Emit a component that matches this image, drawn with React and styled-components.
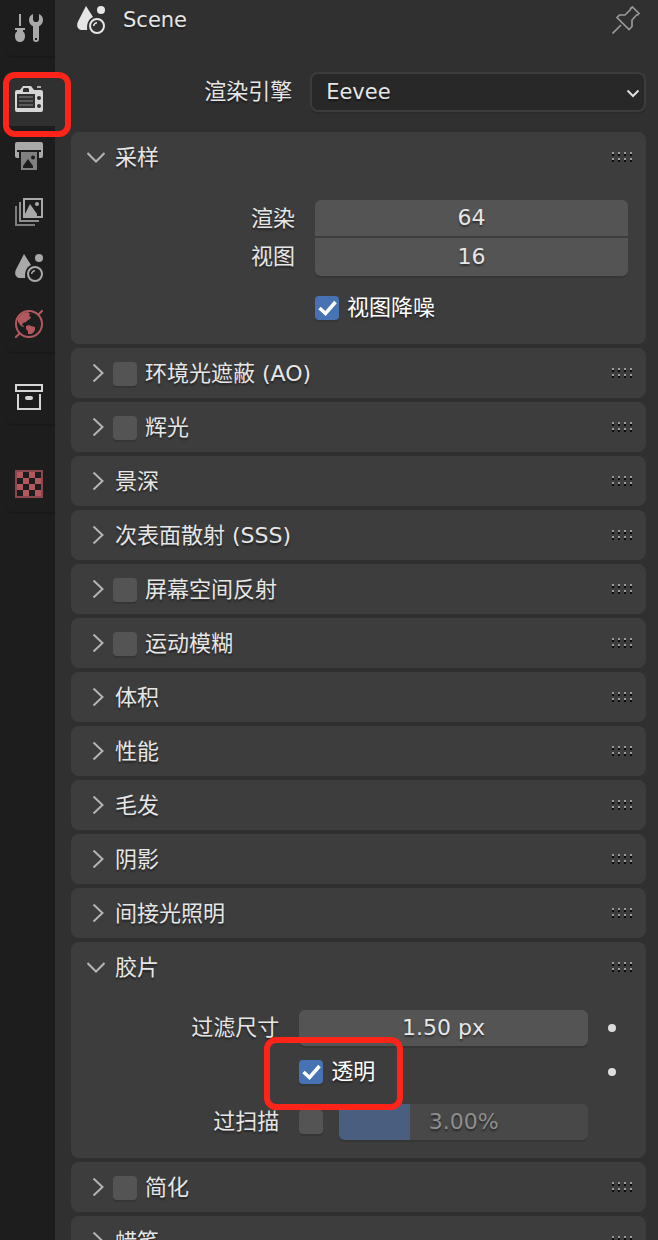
import React, { useState } from "react";
import styled, { createGlobalStyle, css } from "styled-components";

const Global = createGlobalStyle`
  *, *::before, *::after { box-sizing: border-box; }
  html, body { margin: 0; background: #303030; }
  body {
    color: #e6e6e6;
    font: 22px/36px "DejaVu Sans", "Noto Sans CJK SC", sans-serif;
    text-shadow: 0 2px 2px rgba(0, 0, 0, 0.45);
  }
  button, input, select { font: inherit; color: inherit; text-shadow: inherit; margin: 0; }
`;

const Editor = styled.div`
  display: flex;
  height: 100vh;
  overflow: hidden;
`;

/* ---------- tab rail ---------- */

const Rail = styled.nav`
  flex: 0 0 55px;
  background: #1d1d1d;
  padding-left: 4px;
`;

const TabGroup = styled.div`
  margin-top: ${(p) => p.$gap || 0}px;
  border-bottom: 2px solid #191919;
  border-bottom-left-radius: 10px;
`;

const Tab = styled.button`
  position: relative;
  display: flex;
  align-items: flex-start;
  width: 100%;
  height: 54px;
  margin-bottom: 2px;
  padding: 14px 0 0 11px;
  border: 0;
  border-radius: 8px 0 0 8px;
  background: ${(p) => (p.$active ? "#303030" : "transparent")};
`;

const Highlight = styled.span`
  position: absolute;
  inset: ${(p) => p.$inset};
  border: 6px solid #ff2419;
  border-radius: 12px;
  pointer-events: none;
  z-index: 2;
`;

/* ---------- header ---------- */

const Main = styled.main`
  flex: 1;
  min-width: 0;
  padding: 0 12px 0 16px;
`;

const TopBar = styled.header`
  display: flex;
  align-items: center;
  height: 40px;
  padding: 0 6px;
  gap: 18px;
`;

const SceneName = styled.span`
  flex: 1;
  font-size: 21px;
`;

const IconButton = styled.button`
  padding: 0;
  border: 0;
  background: none;
  svg { display: block; }
`;

/* ---------- fields ---------- */

const FieldRow = styled.div`
  display: grid;
  grid-template-columns: 27fr 41fr ${(p) => (p.$dotted ? "20px" : "")};
  column-gap: 20px;
  align-items: center;
  margin-top: ${(p) => p.$gap || 0}px;
`;

const EngineRow = styled(FieldRow)`
  column-gap: 18px;
  margin: 32px 0 20px;
`;

const FieldLabel = styled.label`
  text-align: right;
  white-space: nowrap;
`;

const SelectBox = styled.div`
  position: relative;
  svg {
    position: absolute;
    right: 6px;
    top: 17px;
    pointer-events: none;
  }
`;

const Select = styled.select`
  display: block;
  appearance: none;
  width: 100%;
  height: 40px;
  padding: 0 32px 2px 14px;
  border: 2px solid #3c3c3c;
  border-radius: 8px;
  background: #282828;
  box-shadow: 0 2px 0 #2b2b2b;
  font-size: 21px;
`;

const fieldShape = {
  single: "6px",
  top: "6px 6px 0 0",
  bottom: "0 0 6px 6px",
};

const NumberInput = styled.input`
  display: block;
  width: 100%;
  height: ${(p) => (p.$shape ? 38 : 36)}px;
  padding: 0 0 ${(p) => (p.$shape ? 2 : 0)}px;
  border: 0;
  border-radius: ${(p) => fieldShape[p.$shape || "single"]};
  background: #545454;
  text-align: center;
  ${(p) =>
    p.$shape === "top"
      ? css`border-bottom: 2px solid #3d3d3d;`
      : css`box-shadow: 0 2px 0 #353535;`}
`;

const CheckLabel = styled.label`
  display: flex;
  align-items: center;
  gap: 8px;
  position: relative;
  height: 36px;
  white-space: nowrap;
  color: ${(p) => (p.$bright ? "#ffffff" : "inherit")};
`;

const CheckBox = styled.span`
  position: relative;
  flex: 0 0 24px;
  height: 24px;
  input {
    appearance: none;
    display: block;
    width: 24px;
    height: 24px;
    border-radius: 4px;
    background: #545454;
    box-shadow: 0 2px 0 #353535;
  }
  input:checked { background: #4772b3; }
  svg { position: absolute; inset: 0; visibility: hidden; pointer-events: none; }
  input:checked + svg { visibility: visible; }
`;

const SliderGroup = styled.div`
  display: flex;
  align-items: center;
  gap: 16px;
`;

const SliderBox = styled.div`
  position: relative;
  flex: 1;
  height: 36px;
  output {
    position: absolute;
    inset: 0;
    text-align: center;
    color: #8e8e8e;
    pointer-events: none;
  }
`;

const Slider = styled.input`
  appearance: none;
  display: block;
  width: 100%;
  height: 36px;
  border-radius: 6px;
  background: linear-gradient(to right, #4a5e80 71px, #484848 71px);
  box-shadow: 0 2px 0 #363636;
  &::-webkit-slider-thumb { appearance: none; width: 1px; height: 36px; }
`;

const KeyDot = styled.button`
  width: 8px;
  height: 8px;
  padding: 0;
  border: 0;
  border-radius: 50%;
  background: #dcdcdc;
`;

/* ---------- panels ---------- */

const PanelBox = styled.section`
  margin-bottom: 4px;
  border-radius: 8px;
  background: #3d3d3d;
`;

const PanelHeader = styled.div`
  display: flex;
  align-items: center;
  height: 50px;
  padding: 0 14px 0 16px;
  ${CheckLabel} { margin-top: 2px; }
`;

const Toggle = styled.button`
  display: flex;
  align-items: center;
  gap: 10px;
  padding: 0;
  border: 0;
  background: none;
  white-space: nowrap;
  margin-right: ${(p) => (p.$compact ? 8 : 0)}px;
`;

const Title = styled.span`
  padding-top: 2px;
`;

const Grip = styled.svg`
  margin-left: auto;
`;

const PanelBody = styled.div`
  padding: 18px;
`;

/* ---------- drawings ---------- */

const Icon = ({ children }) => (
  <svg width="28" height="28" viewBox="0 0 28 28" fill="none" aria-hidden="true">
    {children}
  </svg>
);

const ToolIcon = () => (
  <Icon>
    <g fill="#a9a9a9">
      <path d="M4 0h2v12H4zM0 14h10v2H8v1.500c1.300.8 2 2.400 2 4.500 0 3.800-1.700 6-5 6s-5-2.200-5-6c0-2.100.7-3.700 2-4.500V16H0z" />
      <path
        fillRule="evenodd"
        d="M18 0C15.500 1 14 3.300 14 6c0 2.800 1.600 5 4 6.300V25a3 3 0 0 0 6 0V12.300C26.400 11 28 8.800 28 6c0-2.700-1.500-5-4-6v6l-1.500 2h-3L18 6zM20 24h2v2h-2z"
      />
    </g>
  </Icon>
);

const RenderIcon = () => (
  <Icon>
    <path
      fill="#d6d6d6"
      fillRule="evenodd"
      d="M8 0h8l3 4h7a2 2 0 0 1 2 2v18a2 2 0 0 1-2 2H2a2 2 0 0 1-2-2V6a2 2 0 0 1 2-2h3zM9 2L8 3v3h6V3l-1-1zM2 8v14h18V8z"
    />
    <path d="M22 1h4" stroke="#b0b0b0" strokeWidth="2" />
    <path d="M4 11h14M4 15h14M4 19h14" stroke="#6a6a6a" strokeWidth="1.500" />
    <circle cx="24" cy="12" r="2" fill="#303030" />
    <circle cx="24" cy="20" r="2" fill="#303030" />
  </Icon>
);

const OutputIcon = () => (
  <Icon>
    <path fill="#a9a9a9" d="M2 0h24a2 2 0 0 1 2 2v12a2 2 0 0 1-2 2h-2v-6h2V8H2v2h2v6H2a2 2 0 0 1-2-2V2a2 2 0 0 1 2-2z" />
    <path fill="#808080" d="M6 10h16v18H6z" />
    <path fill="#1d1d1d" d="M8 26v-2l5-7 5 7v2z" />
    <circle cx="18" cy="15.500" r="2" fill="#1d1d1d" />
  </Icon>
);

const ViewLayerIcon = () => (
  <Icon>
    <path d="M1 8v19h19" stroke="#7c7c7c" strokeWidth="2" />
    <path d="M5 4v19h19" stroke="#8e8e8e" strokeWidth="2" />
    <rect x="9" y="1" width="18" height="18" stroke="#a9a9a9" strokeWidth="2" />
    <path d="M10 18v-2l5-10 7 10v2z" fill="#a9a9a9" />
    <circle cx="22" cy="6" r="2" fill="#a9a9a9" />
  </Icon>
);

const SceneIcon = ({ color = "#a9a9a9" }) => (
  <Icon>
    <path fill={color} d="M9 0L1 15.500C-1 19.500.5 24 5.500 24h4.700C9.500 18 11.500 13 16 11z" />
    <circle cx="24" cy="4" r="4" fill={color} />
    <circle cx="20" cy="20" r="7" stroke={color} strokeWidth="2" />
    <path d="M16.700 20a3.300 3.300 0 0 1 3.300-3.300" stroke={color} strokeWidth="1.500" />
  </Icon>
);

const WorldIcon = () => (
  <Icon>
    <circle cx="14" cy="14" r="13" stroke="#b2595f" strokeWidth="2" />
    <path d="M0 28l5-5M23 5l5-5" stroke="#b2595f" strokeWidth="2" />
    <path
      fill="#b2595f"
      d="M3 8l5-5 5-1 2 2-1 2 2 1-1 2-2 1-2 2-3 1-1 2 2 1v1l-3-1-3-4zM11 16l3-1 2 1 4 1v3l-2 3-2 1h-3v-3l-2-2z"
    />
  </Icon>
);

const ObjectIcon = () => (
  <Icon>
    <path d="M1 3h26v6H1zM3 12v15h22V12" stroke="#d6d6d6" strokeWidth="2" />
    <rect x="10" y="14" width="8" height="4" rx="2" fill="#d6d6d6" />
  </Icon>
);

const TextureIcon = () => (
  <Icon>
    <rect x="1" y="1" width="26" height="26" stroke="#8b474d" strokeWidth="2" />
    <path
      fill="#b2595f"
      d="M2 2h6v6H2zM14 2h6v6h-6zM8 8h6v6H8zM20 8h6v6h-6zM2 14h6v6H2zM14 14h6v6h-6zM8 20h6v6H8zM20 20h6v6h-6z"
    />
  </Icon>
);

const PinIcon = () => (
  <Icon>
    <path
      d="M0.500 27.500L9 19M20.500 1l6.500 6.500-1.500 1.500h-1L20 14v6.500L17 23.500 5 11.500 7.500 9H13l5.500-5.500V2.500z"
      stroke="#999999"
      strokeWidth="1.700"
    />
  </Icon>
);

const Chevron = ({ open }) => (
  <svg width="18" height="18" viewBox="0 0 18 18" fill="none" aria-hidden="true">
    <path d={open ? "M0.500 5L9 13.500 17.500 5" : "M6.500 0.500L15.500 9 6.500 17.500"} stroke="#b4b4b4" strokeWidth="2" />
  </svg>
);

const DragGrip = () => (
  <Grip width="20" height="10" viewBox="0 0 20 10" aria-hidden="true">
    <path fill="#9a9a9a" d="M0 0h2v2H0zM6 0h2v2H6zM12 0h2v2h-2zM18 0h2v2h-2zM0 6h2v2H0zM6 6h2v2H6zM12 6h2v2h-2zM18 6h2v2h-2z" />
    <path fill="#0c0c0c" d="M0 2h2v2H0zM6 2h2v2H6zM12 2h2v2h-2zM18 2h2v2h-2zM0 8h2v2H0zM6 8h2v2H6zM12 8h2v2h-2zM18 8h2v2h-2z" />
  </Grip>
);

/* ---------- composed parts ---------- */

const Check = (props) => (
  <CheckBox>
    <input type="checkbox" {...props} />
    <svg width="24" height="24" viewBox="0 0 24 24" fill="none" aria-hidden="true">
      <path d="M4.500 12L10.500 17.500 20.500 6" stroke="#ffffff" strokeWidth="3.500" />
    </svg>
  </CheckBox>
);

const Panel = ({ title, checkable, defaultOpen = false, children }) => {
  const [open, setOpen] = useState(defaultOpen);
  const flip = () => setOpen(!open);
  return (
    <PanelBox>
      <PanelHeader>
        {checkable ? (
          <>
            <Toggle type="button" $compact aria-expanded={open} aria-label={title} onClick={flip}>
              <Chevron open={open} />
            </Toggle>
            <CheckLabel>
              <Check />
              {title}
            </CheckLabel>
          </>
        ) : (
          <Toggle type="button" aria-expanded={open} onClick={flip}>
            <Chevron open={open} />
            <Title>{title}</Title>
          </Toggle>
        )}
        <DragGrip />
      </PanelHeader>
      {open && children && <PanelBody>{children}</PanelBody>}
    </PanelBox>
  );
};

const tabGroups = [
  { gap: 0, tabs: [["工具", ToolIcon]] },
  {
    gap: 14,
    tabs: [
      ["渲染", RenderIcon],
      ["输出", OutputIcon],
      ["视图层", ViewLayerIcon],
      ["场景", SceneIcon],
      ["世界", WorldIcon],
    ],
  },
  { gap: 14, tabs: [["物体", ObjectIcon]] },
  { gap: 30, tabs: [["纹理", TextureIcon]] },
];

const middlePanels = [
  ["环境光遮蔽 (AO)", true],
  ["辉光", true],
  ["景深", false],
  ["次表面散射 (SSS)", false],
  ["屏幕空间反射", true],
  ["运动模糊", true],
  ["体积", false],
  ["性能", false],
  ["毛发", false],
  ["阴影", false],
  ["间接光照明", false],
];

export default function App() {
  return (
    <>
      <Global />
      <Editor>
        <Rail>
          {tabGroups.map((group, i) => (
            <TabGroup key={i} $gap={group.gap}>
              {group.tabs.map(([name, Glyph]) => (
                <Tab key={name} type="button" aria-label={name} $active={name === "渲染"}>
                  <Glyph />
                  {name === "渲染" && <Highlight $inset="0 -16px -11px -1px" />}
                </Tab>
              ))}
            </TabGroup>
          ))}
        </Rail>

        <Main>
          <TopBar>
            <SceneIcon color="#e6e6e6" />
            <SceneName>Scene</SceneName>
            <IconButton type="button" aria-label="固定">
              <PinIcon />
            </IconButton>
          </TopBar>

          <EngineRow>
            <FieldLabel htmlFor="engine">渲染引擎</FieldLabel>
            <SelectBox>
              <Select id="engine" defaultValue="Eevee">
                <option>Eevee</option>
                <option>Workbench</option>
                <option>Cycles</option>
              </Select>
              <svg width="14" height="10" viewBox="0 0 14 10" fill="none" aria-hidden="true">
                <path d="M1.500 1.500L7 7 12.500 1.500" stroke="#dedede" strokeWidth="2" />
              </svg>
            </SelectBox>
          </EngineRow>

          <Panel title="采样" defaultOpen>
            <FieldRow>
              <FieldLabel htmlFor="samples">渲染</FieldLabel>
              <NumberInput id="samples" defaultValue="64" $shape="top" />
            </FieldRow>
            <FieldRow>
              <FieldLabel htmlFor="view-samples">视图</FieldLabel>
              <NumberInput id="view-samples" defaultValue="16" $shape="bottom" />
            </FieldRow>
            <FieldRow $gap={14}>
              <span />
              <CheckLabel $bright>
                <Check defaultChecked />
                视图降噪
              </CheckLabel>
            </FieldRow>
          </Panel>

          {middlePanels.map(([title, checkable]) => (
            <Panel key={title} title={title} checkable={checkable} />
          ))}

          <Panel title="胶片" defaultOpen>
            <FieldRow $dotted>
              <FieldLabel htmlFor="filter">过滤尺寸</FieldLabel>
              <NumberInput id="filter" defaultValue="1.50 px" />
              <KeyDot type="button" aria-label="过滤尺寸关键帧" />
            </FieldRow>
            <FieldRow $dotted $gap={8}>
              <span />
              <CheckLabel $bright>
                <Check defaultChecked />
                透明
                <Highlight $inset="-17px 185px -20px -35px" />
              </CheckLabel>
              <KeyDot type="button" aria-label="透明关键帧" />
            </FieldRow>
            <FieldRow $dotted $gap={14}>
              <FieldLabel htmlFor="overscan">过扫描</FieldLabel>
              <SliderGroup>
                <Check id="overscan" />
                <SliderBox>
                  <Slider type="range" min="0" max="50" defaultValue="3" disabled aria-label="过扫描尺寸" />
                  <output>3.00%</output>
                </SliderBox>
              </SliderGroup>
            </FieldRow>
          </Panel>

          <Panel title="简化" checkable />
          <Panel title="蜡笔" />
        </Main>
      </Editor>
    </>
  );
}
